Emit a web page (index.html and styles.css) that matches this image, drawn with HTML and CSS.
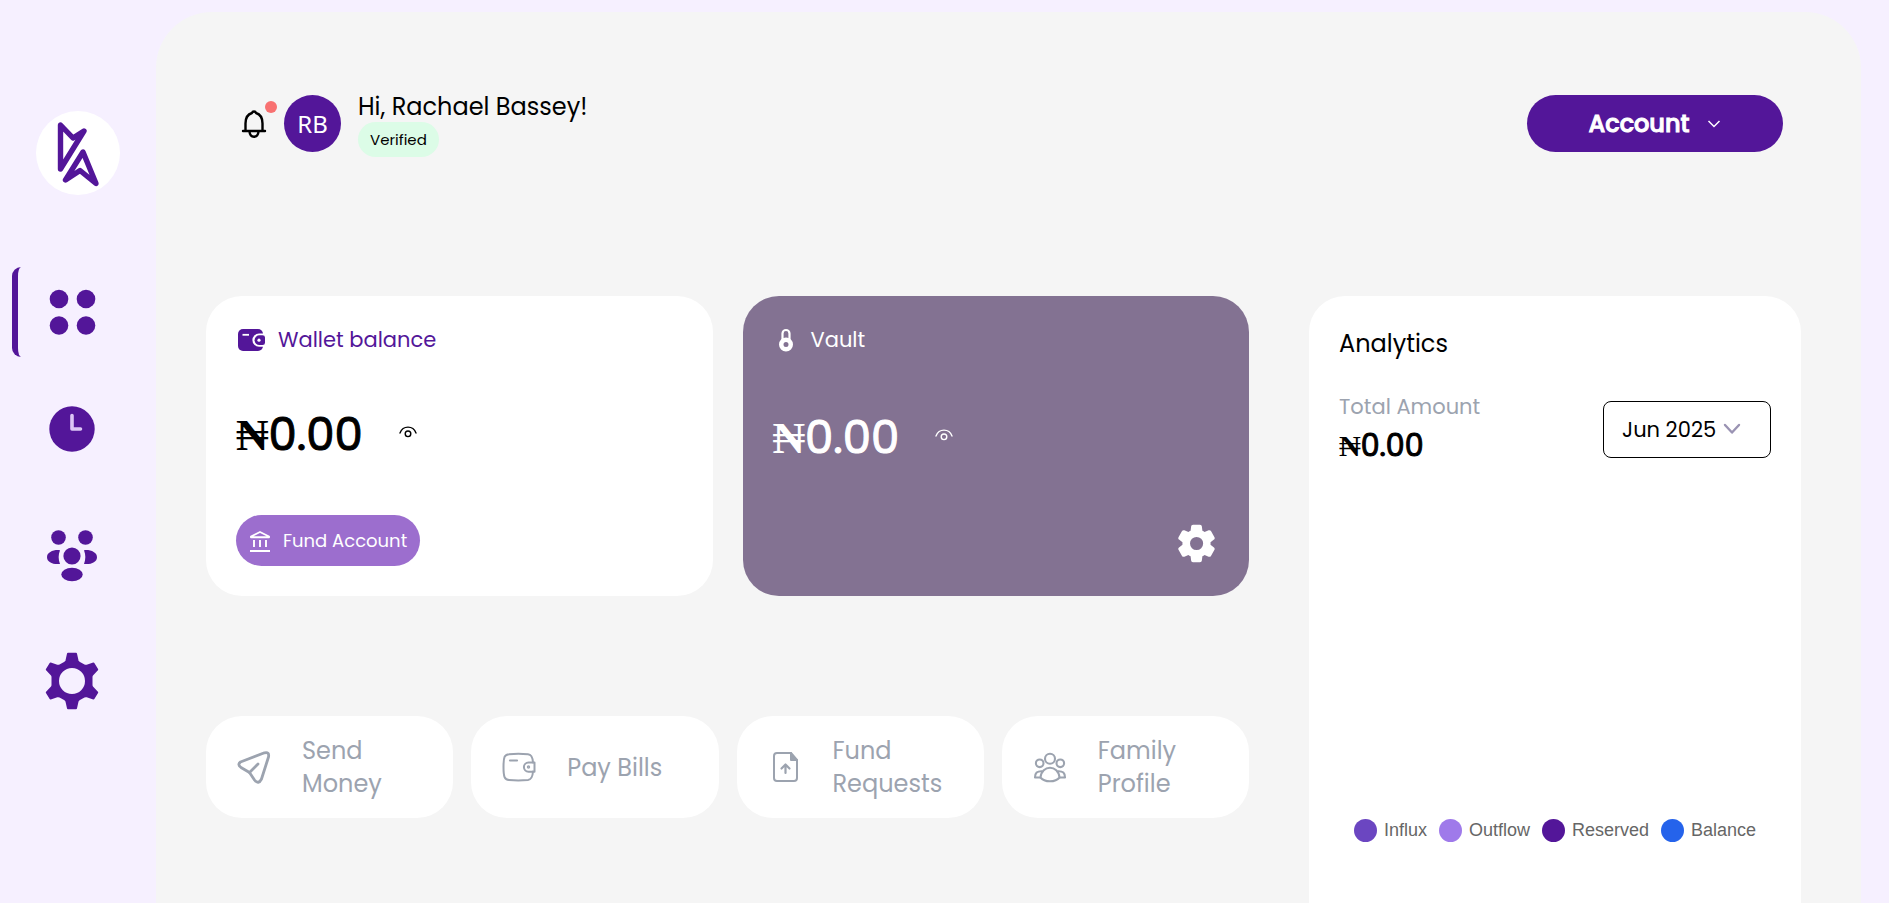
FILE: index.html
```html
<!DOCTYPE html>
<html lang="en">

<head>
    <meta charset="UTF-8">
    <meta name="viewport" content="width=device-width, initial-scale=1.0">
    <title>Dashboard</title>
    <link rel="stylesheet" href="styles.css">
</head>

<body>
    <aside class="sidebar">
        <a href="#" class="logo" aria-label="Home">
            <svg width="84" height="84" viewBox="0 0 84 84" fill="none" stroke="#531699" stroke-width="5.400" stroke-linejoin="round">
                <path d="M24.500 14v44L48 20l-11 7z" />
                <path d="M47 41L29.500 69 44 59.500 60 72.500z" />
            </svg>
        </a>
        <nav class="menu">
            <a href="#" class="active" aria-label="Dashboard">
                <svg width="48" height="48" viewBox="0 0 48 48" fill="currentColor">
                    <circle cx="11" cy="11" r="9.300" />
                    <circle cx="38" cy="11" r="9.300" />
                    <circle cx="11" cy="37.500" r="9.300" />
                    <circle cx="38" cy="37.500" r="9.300" />
                </svg>
            </a>
            <a href="#" aria-label="History">
                <svg width="48" height="48" viewBox="0 0 48 48" fill="none">
                    <circle cx="24" cy="23" r="22.700" fill="currentColor" />
                    <path d="M24 9.500v13.500h8.500" stroke="#dcc6f5" stroke-width="3.600" stroke-linecap="round" stroke-linejoin="round" />
                </svg>
            </a>
            <a href="#" aria-label="Family">
                <svg width="58" height="58" viewBox="0 0 58 58" fill="currentColor">
                    <circle cx="15.500" cy="13.500" r="7.300" />
                    <circle cx="42.500" cy="13.500" r="7.300" />
                    <circle cx="29" cy="32" r="8.600" />
                    <ellipse cx="29" cy="50.500" rx="10.700" ry="6.700" />
                    <path d="M17 26.200c-6.500-.7-13 2-13 7s6.500 7.700 13 6.700c-1.800-4.500-1.800-9.200 0-13.700z" />
                    <path d="M41 26.200c6.500-.7 13 2 13 7s-6.500 7.700-13 6.700c1.800-4.500 1.800-9.200 0-13.700z" />
                </svg>
            </a>
            <a href="#" aria-label="Settings">
                <svg width="58" height="58" viewBox="0 0 58 58">
                    <path fill="currentColor" stroke="currentColor" stroke-width="2" stroke-linejoin="round" fill-rule="evenodd" d="M25 1.800h8l1.500 6.700q.5 1.500 2 2.300l4.500 2.500q1.500.8 3 .3l6.500-2.100 3.700 6-4.700 5q-1 1-1 2.500v8q0 1.500 1 2.500l4.700 5-3.700 6-6.500-2.100q-1.500-.5-3 .3l-4.500 2.500q-1.500.8-2 2.300L33 56.200h-8l-1.500-6.700q-.5-1.500-2-2.300L17 44.700q-1.500-.8-3-.3l-6.500 2.100-3.700-6 4.700-5q1-1 1-2.500v-8q0-1.500-1-2.500l-4.700-5 3.700-6 6.500 2.100q1.500.5 3-.3l4.500-2.500q1.500-.8 2-2.300zM29 15a14 14 0 1 0 0 28 14 14 0 0 0 0-28z" />
                </svg>
            </a>
        </nav>
    </aside>

    <main class="main">
        <header class="header">
            <div class="user">
                <button class="bell" aria-label="Notifications">
                    <svg width="26" height="30" viewBox="0 0 26 30" fill="none" stroke="#000" stroke-width="2.400" stroke-linejoin="round" stroke-linecap="round">
                        <path d="M2 22h22M4.500 21.500v-7C4.500 8.500 7.500 5 11 4c.5-2 3.500-2 4 0 3.500 1 6.500 4.500 6.500 10.500v7" />
                        <path d="M8.500 22.500c.5 7 8.500 7 9 0" />
                    </svg>
                    <span class="dot"></span>
                </button>
                <div class="avatar">RB</div>
                <div>
                    <p class="hello">Hi, Rachael Bassey!</p>
                    <span class="verified">Verified</span>
                </div>
            </div>
            <button class="account">
                Account
                <svg width="14" height="8" viewBox="0 0 14 8" fill="none" stroke="currentColor" stroke-width="1.500">
                    <path d="M1.500 1L7 6.500 12.500 1" />
                </svg>
            </button>
        </header>

        <div class="content">
            <div class="left">
                <div class="cards">
                    <section class="card">
                        <h2 class="card-title">
                            <svg width="30" height="24" viewBox="0 0 30 24">
                                <rect x="2" y="1" width="25" height="22" rx="5" fill="currentColor" />
                                <path d="M6.500 6.800h6.500" stroke="#fff" stroke-width="1.800" />
                                <path d="M27.500 5.500H23a6.600 6.600 0 0 0 0 13.200h4.500z" fill="#fff" />
                                <path d="M26.500 7.300h-3a4.900 4.900 0 0 0 0 9.800h3q2.500 0 2.500-2.300v-5.200q0-2.300-2.500-2.300z" fill="currentColor" />
                                <circle cx="23" cy="12.200" r="1.600" fill="#fff" />
                            </svg>
                            Wallet balance
                        </h2>
                        <div class="balance">
                            <p><span class="naira">₦</span>0.00</p>
                            <button class="eye" aria-label="Hide balance">
                                <svg width="18" height="12" viewBox="0 0 18 12" fill="none" stroke="currentColor" stroke-width="1.400" stroke-linecap="round">
                                    <path d="M1 7C4-.8 14-.8 17 7" />
                                    <circle cx="9" cy="7.800" r="2.800" />
                                </svg>
                            </button>
                        </div>
                        <button class="fund">
                            <svg width="22" height="22" viewBox="0 0 22 22" fill="none" stroke="currentColor" stroke-width="1.900" stroke-linejoin="round">
                                <path d="M2 7.200V6.500L11 2l9 4.500v.7zM1 21h20M5 10v7M11 10v7M17 10v7" />
                            </svg>
                            Fund Account
                        </button>
                    </section>

                    <section class="card vault">
                        <h2 class="card-title">
                            <svg width="26" height="24" viewBox="0 0 26 24">
                                <path d="M9.500 12V5.500a3.500 3.500 0 0 1 7 0V12" fill="none" stroke="currentColor" stroke-width="2.200" />
                                <path fill="currentColor" fill-rule="evenodd" d="M13 9.500a7 7 0 1 0 0 14 7 7 0 0 0 0-14zm0 4.500a2.500 2.500 0 1 1 0 5 2.500 2.500 0 0 1 0-5z" />
                            </svg>
                            Vault
                        </h2>
                        <div class="balance">
                            <p><span class="naira">₦</span>0.00</p>
                            <button class="eye" aria-label="Hide balance">
                                <svg width="18" height="12" viewBox="0 0 18 12" fill="none" stroke="currentColor" stroke-width="1.400" stroke-linecap="round">
                                    <path d="M1 7C4-.8 14-.8 17 7" />
                                    <circle cx="9" cy="7.800" r="2.800" />
                                </svg>
                            </button>
                        </div>
                        <button class="vault-settings" aria-label="Vault settings">
                            <svg width="45" height="45" viewBox="0 0 24 24" fill="currentColor">
                                <path fill-rule="evenodd" d="M19.500 12c0-.23-.01-.45-.03-.68l1.860-1.410c.4-.3.510-.86.260-1.300l-1.870-3.230c-.25-.44-.79-.62-1.250-.42l-2.150.91c-.37-.26-.76-.49-1.170-.68l-.29-2.310c-.06-.5-.49-.88-.99-.88h-3.730c-.51 0-.94.380-1 .88l-.29 2.310c-.41.190-.8.420-1.170.68l-2.150-.91c-.46-.2-1-.02-1.250.420L2.410 8.620c-.25.440-.14.990.260 1.300l1.860 1.410c-.02.220-.03.440-.03.670s.010.450.030.680l-1.860 1.410c-.4.300-.51.860-.26 1.300l1.870 3.230c.25.440.79.620 1.250.420l2.150-.91c.370.260.760.490 1.170.68l.29 2.310c.06.500.49.880.99.880h3.730c.5 0 .93-.38.990-.88l.29-2.310c.41-.19.8-.42 1.170-.68l2.150.910c.46.200 1 .02 1.250-.42l1.870-3.230c.25-.44.140-.99-.26-1.300l-1.860-1.410c.03-.23.040-.45.040-.68zm-7.460 3.500a3.500 3.500 0 1 1 0-7 3.500 3.500 0 0 1 0 7z" />
                            </svg>
                        </button>
                    </section>
                </div>

                <div class="actions">
                    <a href="#" class="action">
                        <svg width="36" height="36" viewBox="0 0 36 36" fill="none" stroke="currentColor" stroke-width="2.800" stroke-linejoin="round" stroke-linecap="round">
                            <path d="M4.500 13L28.500 3.800Q33.500 2.500 32.500 8L25.500 30Q22.500 36 18.500 31L13.500 23.500 5 18.500Q1 15.500 4.500 13z" />
                            <path d="M13.500 23.500L22 15" />
                        </svg>
                        <span>Send Money</span>
                    </a>
                    <a href="#" class="action">
                        <svg width="36" height="36" viewBox="0 0 36 36" fill="none" stroke="currentColor" stroke-width="2" stroke-linecap="round">
                            <path d="M32 13.500C31.500 6.500 29.500 5.500 27 5.200 20.500 4.500 14 4.500 8 5.200 3.500 5.500 2.500 8 2.500 18s1 12.500 5.500 13c6 .6 12.500.6 19 0 2.500-.3 4.500-1.500 5-8.500" />
                            <path d="M33.500 13.500h-6a4.600 4.600 0 0 0 0 9.200h6z" stroke-linejoin="round" />
                            <path d="M9 11.500h7" stroke-width="2.200" />
                            <circle cx="27.500" cy="18" r=".7" />
                        </svg>
                        <span>Pay Bills</span>
                    </a>
                    <a href="#" class="action">
                        <svg width="36" height="36" viewBox="0 0 36 36" fill="none" stroke="currentColor" stroke-width="2" stroke-linecap="round" stroke-linejoin="round">
                            <path d="M24 4H10Q7 4 7 7v22q0 3 3 3h17q3 0 3-3V11" />
                            <path d="M24 4v7h6z" fill="currentColor" />
                            <path d="M18.500 24v-8M14.500 19.500l4-4 4 4" stroke-width="2.200" />
                        </svg>
                        <span>Fund Requests</span>
                    </a>
                    <a href="#" class="action">
                        <svg width="36" height="36" viewBox="0 0 36 36" fill="none" stroke="currentColor" stroke-width="2.100" stroke-linejoin="round">
                            <circle cx="18" cy="9.800" r="5" />
                            <circle cx="7.700" cy="14.300" r="3.800" />
                            <circle cx="28.300" cy="14.300" r="3.800" />
                            <path d="M8.500 28.500c1-13 18-13 19 0-4 5-15 5-19 0z" />
                            <path d="M8.500 28.500H3c0-4.500 2-6.500 7-6.300M27.500 28.500H33c0-4.500-2-6.500-7-6.300" />
                        </svg>
                        <span>Family Profile</span>
                    </a>
                </div>
            </div>

            <section class="analytics">
                <h2>Analytics</h2>
                <div class="total">
                    <div>
                        <p class="label">Total Amount</p>
                        <p class="amount"><span class="naira">₦</span>0.00</p>
                    </div>
                    <div class="month">
                        <select aria-label="Month">
                            <option>Jun 2025</option>
                            <option>May 2025</option>
                            <option>Apr 2025</option>
                        </select>
                        <svg width="18" height="12" viewBox="0 0 18 12" fill="none" stroke="#9a93b3" stroke-width="2.400" stroke-linecap="round" stroke-linejoin="round">
                            <path d="M2 2l7 7.500L16 2" />
                        </svg>
                    </div>
                </div>
                <ul class="legend">
                    <li><span class="swatch influx"></span>Influx</li>
                    <li><span class="swatch outflow"></span>Outflow</li>
                    <li><span class="swatch reserved"></span>Reserved</li>
                    <li><span class="swatch remaining"></span>Balance</li>
                </ul>
            </section>
        </div>
    </main>
</body>

</html>
```
FILE: styles.css
```css
* {
    box-sizing: border-box;
    margin: 0;
    padding: 0;
}

body {
    display: flex;
    min-height: 100vh;
    background-color: #f6f0ff;
    color: #000;
    font-family: Poppins, Inter, sans-serif;
    font-size: 21px;
}

button {
    border: none;
    background: none;
    color: inherit;
    font-family: inherit;
    cursor: pointer;
}

a {
    color: inherit;
    text-decoration: none;
}

svg {
    display: block;
    flex-shrink: 0;
}

/* sidebar */
.sidebar {
    width: 156px;
    flex-shrink: 0;
    padding-top: 111px;
}

.logo {
    display: block;
    width: 84px;
    height: 84px;
    margin-left: 36px;
    border-radius: 50%;
    background-color: #fff;
}

.menu {
    display: flex;
    flex-direction: column;
    align-items: center;
    gap: 70px;
    margin-top: 93px;
    padding-right: 12px;
    color: #531699;
}

.menu a {
    position: relative;
}

.menu .active::before {
    content: "";
    position: absolute;
    left: -36px;
    top: -21px;
    width: 9px;
    height: 90px;
    border-left: 6px solid #531699;
    border-radius: 9px 0 0 9px;
}

/* main */
.main {
    flex: 1;
    min-width: 0;
    display: flex;
    flex-direction: column;
    margin: 12px 28px 0 0;
    padding: 83px 60px 0 50px;
    border-radius: 56px 56px 0 0;
    background-color: #f5f5f5;
}

.header {
    display: flex;
    justify-content: space-between;
    align-items: flex-start;
    height: 63px;
    margin-bottom: 138px;
    padding: 0 18px 0 35px;
}

.user {
    display: flex;
    gap: 17px;
}

.bell {
    position: relative;
    height: 57px;
}

.dot {
    position: absolute;
    top: 6px;
    right: -10px;
    width: 12px;
    height: 12px;
    border-radius: 50%;
    background-color: #f87171;
}

.avatar {
    width: 57px;
    height: 57px;
    border-radius: 50%;
    background-color: #531699;
    color: #fff;
    font-family: "Noto Sans", sans-serif;
    font-size: 24px;
    line-height: 57px;
    text-align: center;
}

.hello {
    font-size: 24px;
    line-height: 24px;
    margin-bottom: 3px;
}

.verified {
    display: inline-block;
    padding: 0 12px;
    border-radius: 18px;
    background-color: #dcfce7;
    font-size: 15px;
    line-height: 35px;
}

.account {
    display: flex;
    align-items: center;
    justify-content: center;
    gap: 18px;
    width: 256px;
    height: 57px;
    border-radius: 30px;
    background-color: #531699;
    color: #fff;
    font-size: 24px;
    font-weight: 500;
    -webkit-text-stroke: 1px currentColor;
}

.content {
    flex: 1;
    display: grid;
    grid-template-columns: minmax(0, 53fr) minmax(0, 25fr);
    gap: 60px;
}

.cards {
    display: grid;
    grid-template-columns: 1fr 1fr;
    gap: 30px;
}

.card {
    display: flex;
    flex-direction: column;
    justify-content: space-between;
    align-items: flex-start;
    height: 300px;
    padding: 30px;
    border-radius: 36px;
    background-color: #fff;
}

.card-title {
    display: flex;
    align-items: center;
    gap: 12px;
    color: #531699;
    font-size: 21px;
    font-weight: 400;
    line-height: 28px;
}

.naira {
    font-family: "Liberation Serif", serif;
    font-weight: 700;
    -webkit-text-stroke: 0;
}

.balance {
    display: flex;
    align-items: center;
    gap: 36px;
    font-size: 45px;
    line-height: 56px;
}

.balance p,
.amount {
    -webkit-text-stroke: 1px currentColor;
}

.eye {
    margin-bottom: 6px;
}

.fund {
    display: flex;
    align-items: center;
    gap: 12px;
    height: 51px;
    padding: 0 13px;
    border-radius: 26px;
    background-color: #9c6ece;
    color: #fff;
    font-size: 18px;
}

.vault,
.vault .card-title {
    color: #fff;
}

.vault {
    background-color: #837292;
}

.vault-settings {
    align-self: flex-end;
}

.actions {
    display: grid;
    grid-template-columns: repeat(4, minmax(0, 1fr));
    gap: 18px;
    margin-top: 120px;
}

.action {
    display: flex;
    align-items: center;
    gap: 30px;
    min-height: 102px;
    padding: 18px 30px;
    border-radius: 36px;
    background-color: #fff;
    color: #9ca3af;
    font-size: 24px;
    line-height: 33px;
}

/* analytics */
.analytics {
    padding: 30px;
    border-radius: 36px 36px 0 0;
    background-color: #fff;
}

.analytics h2 {
    font-size: 24px;
    font-weight: 400;
    line-height: 36px;
}

.total {
    display: flex;
    justify-content: space-between;
    align-items: flex-start;
    margin-top: 28px;
}

.label {
    color: #9ca3af;
    line-height: 33px;
}

.amount {
    font-size: 30px;
    line-height: 45px;
}

.month {
    position: relative;
    margin-top: 11px;
}

.month select {
    appearance: none;
    width: 168px;
    height: 57px;
    padding: 0 18px;
    border: 1px solid #000;
    border-radius: 8px;
    background-color: #fff;
    color: #000;
    font-family: inherit;
    font-size: 21px;
}

.month svg {
    position: absolute;
    top: 22px;
    right: 30px;
    pointer-events: none;
}

.legend {
    display: flex;
    justify-content: center;
    gap: 12px;
    margin-top: 350px;
    list-style: none;
    color: #666;
    font-family: "Liberation Sans", Arial, sans-serif;
    font-size: 18px;
    line-height: 24px;
}

.legend li {
    display: flex;
    align-items: center;
    gap: 7px;
}

.swatch {
    width: 23px;
    height: 23px;
    border-radius: 50%;
}

.influx {
    background-color: #6b46c1;
}

.outflow {
    background-color: #9f7aea;
}

.reserved {
    background-color: #531699;
}

.remaining {
    background-color: #2563eb;
}
```
